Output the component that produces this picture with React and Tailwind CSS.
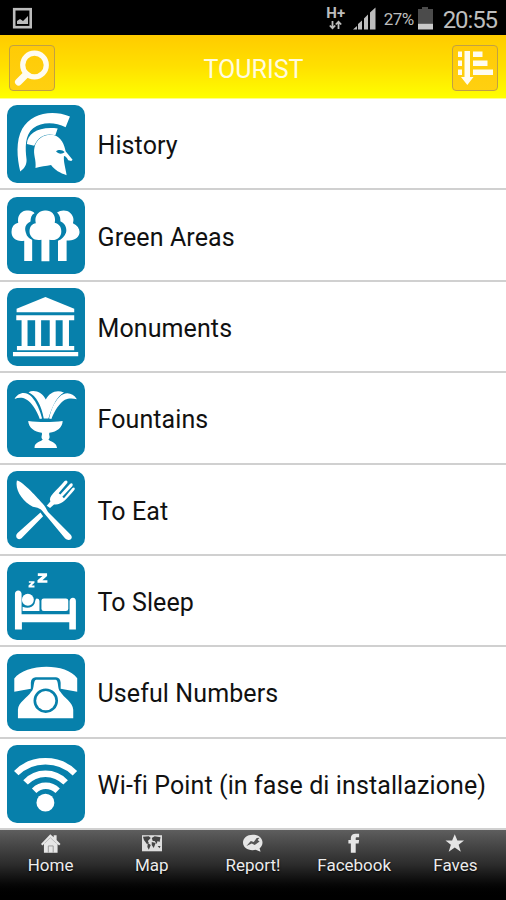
import React, { useState } from "react";

const HelmetIcon = () => (
  <>
    <path d="M60 221 C50 180 46 128 66 92 C92 48 152 32 210 55 L197 87 C164 70 124 71 99 90 C73 111 75 150 79 184 C80 198 75 210 60 221Z" />
    <path d="M80 138 C82 105 116 84 173 91 L166 111 C140 105 117 111 102 143Z" />
    <path
      fillRule="evenodd"
      d="M106 210 C109 184 98 169 103 148 C109 118 139 105 163 111 C184 117 193 139 197 160 L218 185 L214 189 L205 187 C200 178 196 174 192 174 C190 192 197 210 200 232 C181 225 163 216 153 201 C137 205 122 205 106 210Z M168 160 C175 153 188 155 194 162 C187 170 174 168 168 160Z"
    />
  </>
);

const TreesIcon = () => (
  <>
    <path d="M72 213 V152 C48 157 31 142 34 122 C35 108 43 101 54 98 C50 76 63 62 79 61 C91 59 101 64 103 69 C94 73 91 83 91 94 C75 101 72 115 77 128 C80 140 87 146 96 149 V213Z" />
    <path d="M174 213 V152 C186 148 194 139 198 128 C202 112 195 99 181 93 C182 82 178 73 171 67 C184 58 201 59 211 68 C220 77 223 87 219 99 C232 105 239 114 239 126 C239 142 223 154 200 151 V213Z" />
    <path
      d="M124 214 V149 C104 154 87 142 88 122 C89 108 96 101 107 99 C101 77 117 60 136 61 C156 60 169 76 164 98 C178 102 184 111 184 124 C184 143 168 154 148 149 V214Z"
      stroke="#0780ab"
      strokeWidth="9"
      paintOrder="stroke"
    />
  </>
);

const TempleIcon = () => (
  <>
    <path d="M49 93 V83 L136 47 L223 83 V93Z" />
    <path d="M48 102 H223 V117 H48Z M66 117 H79 V195 H66Z M105 117 H123 V195 H105Z M149 117 H167 V195 H149Z M191 117 H206 V195 H191Z" />
    <path d="M64 115 H82 V198 H64Z M188 115 H207 V198 H188Z" />
    <path d="M50 195 H223 V208 H50Z M38 213 H235 V226 H38Z" />
  </>
);

const FountainIcon = () => (
  <>
    <path d="M43 77 C53 57 78 52 95 71 C110 88 119 110 126 136 L119 138 C110 111 94 87 77 78 C66 72 54 73 43 77Z" />
    <path d="M85 57 C103 47 128 59 137 79 C149 57 170 48 192 58 C173 69 160 90 145 136 H131 C124 98 109 68 85 57Z" />
    <path d="M231 78 C218 57 195 54 178 71 C162 87 153 110 147 136 L154 138 C163 113 180 89 195 80 C206 74 219 75 231 78Z" />
    <path d="M84 144 C116 148 156 148 188 144 C188 163 171 177 148 179 C145 187 153 191 145 200 C150 207 169 207 171 225 H103 C103 207 123 207 128 200 C120 191 128 187 125 179 C103 177 85 164 84 144Z" />
  </>
);

const CutleryIcon = () => (
  <>
    <path d="M50 49 C65 51 103 91 128 119 C137 129 139 136 144 144 L213 213 C222 225 206 234 195 223 L126 140 C119 132 109 130 98 128 C67 112 43 78 50 49Z" />
    <path d="M121 145 L129 157 L66 221 C54 235 41 216 52 207Z" />
    <path d="M140 125 L151 112 C144 96 167 82 194 50 C199 46 205 50 202 56 L176 87 L181 91 L210 59 C217 54 221 61 217 66 L187 98 L192 102 L217 72 C223 66 228 73 222 79 C196 109 183 124 162 121 L150 132Z" />
  </>
);

const BedIcon = () => (
  <>
    <path d="M113 54 H141 V62 L127 75 H142 V83 H112 V75 L127 62 H113Z M86 78 H103 V83 L94 91 H103 V97 H85 V91 L94 83 H86Z" />
    <path d="M44 224 V115 Q45 107 54 106 Q63 107 64 116 V178 H209 V138 Q210 129 219 128 Q228 129 228 138 V224 H208 V202 H65 V224Z" />
    <circle cx="83" cy="134" r="18" />
    <path d="M67 155 C83 162 97 157 103 146 C106 137 105 131 110 130 Q117 130 118 137 V168 H67Z" />
    <rect x="124" y="130" width="81" height="38" rx="7" />
  </>
);

const PhoneIcon = () => (
  <>
    <path d="M42 134 V94 C75 48 198 45 232 93 V134 L182 125 V107 Q181 91 168 90 H107 Q93 91 92 106 V125Z" />
    <path
      fillRule="evenodd"
      d="M53 214 V188 C54 166 82 152 93 134 C104 126 98 99 108 98 H167 C177 99 171 126 181 134 C191 151 219 166 220 188 V214Z M174 161 A37 37 0 1 0 100 161 A37 37 0 1 0 174 161Z"
    />
    <circle cx="137" cy="161" r="29" />
  </>
);

const WifiIcon = () => (
  <>
    <g fill="none" stroke="#fff" strokeWidth="19">
      <path d="M48 105 C95 57 177 57 225 105" />
      <path d="M76 133 C109 98 163 98 197 133" />
      <path d="M102 158 C122 138 152 138 173 158" />
    </g>
    <circle cx="136" cy="194" r="27" />
  </>
);

const categories = [
  { name: "History", Icon: HelmetIcon },
  { name: "Green Areas", Icon: TreesIcon },
  { name: "Monuments", Icon: TempleIcon },
  { name: "Fountains", Icon: FountainIcon },
  { name: "To Eat", Icon: CutleryIcon },
  { name: "To Sleep", Icon: BedIcon },
  { name: "Useful Numbers", Icon: PhoneIcon },
  { name: "Wi-fi Point (in fase di installazione)", Icon: WifiIcon },
];

const tabs = [
  {
    name: "Home",
    icon: (
      <>
        <path d="M0 11 L9.5 1 L13 4 V2 H16 V7 L20 11 L18.5 12.5 L17 11 V20 H3 V11 L1.5 12.5Z" />
        <path d="M7.5 20 V13 H12.5 V20" fill="none" stroke="#999" />
        <path d="M3.5 10.5 L9.5 4.5 L16 10.5" fill="none" stroke="#aaa" strokeWidth=".7" />
      </>
    ),
  },
  {
    name: "Map",
    icon: (
      <>
        <path d="M0 2 H20.5 V18.5 H0Z" fill="#ddd" />
        <path d="M1 3.5 L7 3 L9 5 L6 8 L7 10 L5 11 L2 7Z M6 10 L9 12 L7 17 L5.5 14Z M10 5 L13 3 L19 4 L18 9 L16 8 L15 11 L13 8 L11 8Z M10 9 L14 10 L12 15 L10 12Z M16 13 L19 13 L18 15.5Z" fill="#444" />
      </>
    ),
  },
  {
    name: "Report!",
    icon: (
      <>
        <path d="M10 1.5 C16 1.5 20 5 20 9.5 C20 12 18.8 14 17 15.5 L18 19 L13 17 C6 18.5 0 15 0 9.5 C0 5 4 1.5 10 1.5Z" />
        <path d="M3.5 13 L8 8 L11 9 L14 5 L17 4.5 L15 7 L17 8.5 L12 12 L9 10.5Z" fill="#555" />
      </>
    ),
  },
  {
    name: "Facebook",
    icon: <path d="M7 20 V10.5 H4.5 V7 H7 V5 C7 2 9 .5 12 .5 H15.5 V4 H13 Q12 4 12 5 V7 H15.5 L15 10.5 H12 V20Z" />,
  },
  {
    name: "Faves",
    icon: <path d="M10 1 L12.7 7.5 H19.5 L14 11.8 L16.2 19 L10 14.7 L3.8 19 L6 11.8 L.5 7.5 H7.3Z" />,
  },
];

const StatusBar = () => (
  <div className="flex h-[35px] shrink-0 items-center bg-black text-[#bdbdbd]">
    <svg className="ml-[12px] h-[22px] w-[21px]" viewBox="0 0 21 22">
      <rect x="2.2" y="2.2" width="16.5" height="18" fill="none" stroke="#bcbcbc" strokeWidth="2.6" />
      <path d="M5 17 V14 L8 12 L11 14 L16 9 V17Z" fill="#bcbcbc" />
    </svg>
    <div className="ml-auto flex h-full items-center">
      <div className="mr-[7px] flex w-[20px] flex-col items-center">
        <span className="text-[15px] leading-[14px] font-bold">H+</span>
        <svg className="h-[10px] w-[13px]" viewBox="0 0 13 10" fill="none" stroke="#bdbdbd" strokeWidth="1.8">
          <path d="M3.5 1 V8 M.8 5.5 L3.5 8.3 L6.2 5.5 M9.5 9 V2 M6.8 4.5 L9.5 1.7 L12.2 4.5" />
        </svg>
      </div>
      <svg className="mr-[8px] h-[24px] w-[23px]" viewBox="0 0 23 24" fill="#bdbdbd">
        <path d="M0 23.5 L4 20 V23.5Z M5 23.5 V18 L9 14.5 V23.5Z M11 23.5 V12.5 L15 8.5 V23.5Z M17 23.5 V6.5 L22.5 1.5 V23.5Z" />
      </svg>
      <span className="w-[32px] pt-[3px] text-[17px] leading-none tracking-[-0.6px] whitespace-nowrap">27%</span>
      <svg className="mr-[9px] ml-[1px] h-[24px] w-[17px]" viewBox="0 0 17 24">
        <path d="M1 3 H5 V1 H11 V3 H16 V17 H1Z" fill="#4b4b4b" />
        <path d="M1 17.5 H16 V23.5 H1Z" fill="#c9c9c9" />
      </svg>
      <span className="mr-[9px] pt-[4px] text-[24px] leading-none tracking-[-1.1px]">20:55</span>
    </div>
  </div>
);

const Header = () => (
  <header className="flex h-[64px] shrink-0 items-center justify-between border-b border-[#ffff8c] bg-linear-to-b from-[#ffcb00] via-[#ffe000] to-[#ffff00] pt-[2px] pr-[8px] pl-[9px]">
    <button className="h-[46px] w-[46px] rounded-[4px] border border-[#c1a043] bg-linear-to-b from-[#ffcb05] to-[#ffd010]">
      <svg className="h-[44px] w-[44px]" viewBox="0 0 44 44" fill="none" stroke="#fffcf0">
        <circle cx="24.5" cy="19" r="11.8" strokeWidth="5.2" />
        <path d="M16 28.5 L8.5 36" strokeWidth="7" strokeLinecap="round" />
      </svg>
    </button>
    <h1 className="pt-[4px] text-[25px] leading-none text-[#fffbe0]">TOURIST</h1>
    <button className="h-[46px] w-[46px] rounded-[4px] border border-[#c1a043] bg-linear-to-b from-[#ffcb05] to-[#ffd010]">
      <svg className="h-[44px] w-[44px]" viewBox="0 0 44 44" fill="#fffcf0">
        <path d="M11.5 5 H17 V31 H20.5 L14.3 39 L8 31 H11.5Z" />
        <path d="M5 5.5 H9 V11 H5Z M5 14.5 H9 V20 H5Z M5 23.5 H9 V29 H5Z M20 5.5 H29.5 V11 H20Z M20 14.5 H34.5 V20 H20Z M20 23.5 H40 V29 H20Z" />
      </svg>
    </button>
  </header>
);

const App = () => {
  const [active, setActive] = useState("Home");

  return (
    <div className="flex h-[900px] w-[506px] flex-col overflow-hidden bg-white font-[Roboto,sans-serif]">
      <StatusBar />
      <Header />
      <ul className="grid h-[731px] shrink-0 grid-rows-8">
        {categories.map(({ name, Icon }) => (
          <li key={name} className="flex items-center border-b-2 border-[#d0d0d0] pt-px pl-[7px]">
            <svg className="h-[77.5px] w-[77.5px] shrink-0 rounded-[10px] bg-[#0780ab]" viewBox="20 20 234 234" fill="#fff">
              <Icon />
            </svg>
            <span className="ml-[13px] pt-[3px] text-[25px] leading-none tracking-[0.1px] whitespace-nowrap text-[#111]">
              {name}
            </span>
          </li>
        ))}
      </ul>
      <nav className="grid flex-1 grid-cols-5 bg-linear-to-b from-[#5e5e5e] via-[#2b2b2b] to-black">
        {tabs.map((tab) => (
          <button
            key={tab.name}
            onClick={() => setActive(tab.name)}
            aria-pressed={active === tab.name}
            className="flex flex-col items-center pt-[3px] text-[#ececec]"
          >
            <svg className="h-[20px] w-[20px]" viewBox="0 0 20.5 20" fill="#e6e6e6">
              {tab.icon}
            </svg>
            <span className="mt-[2px] text-[17px] leading-[20px] [text-shadow:0_1px_2px_#000]">{tab.name}</span>
          </button>
        ))}
      </nav>
    </div>
  );
};

export default App;
